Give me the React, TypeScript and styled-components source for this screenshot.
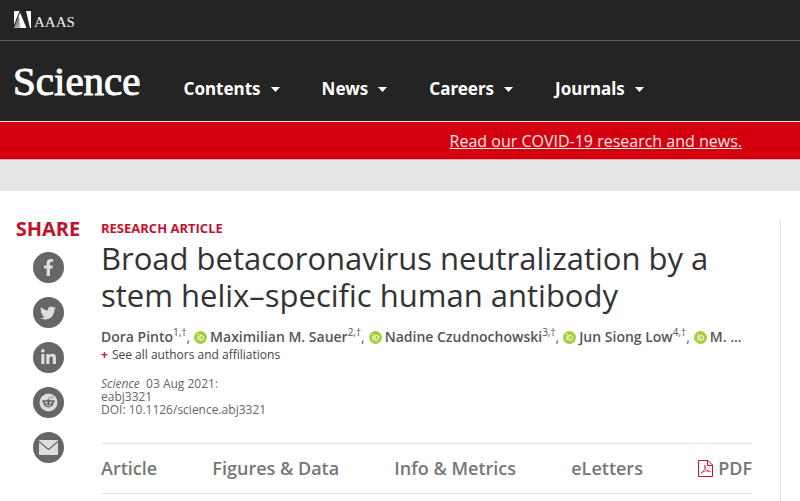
import React from "react";
import styled, { createGlobalStyle } from "styled-components";
import { FaFacebookF, FaTwitter, FaLinkedinIn } from "react-icons/fa";

const Global = createGlobalStyle`
  *, *::before, *::after { box-sizing: border-box; }
  body {
    margin: 0;
    background: #fff;
    color: #333;
    font-family: "Open Sans", "Noto Sans", sans-serif;
  }
  h1, p, ul { margin: 0; padding: 0; }
  ul { list-style: none; }
  a { color: inherit; text-decoration: none; }
`;

const Page = styled.div`
  min-height: 100vh;
  display: flex;
  flex-direction: column;
`;

const TopBar = styled.div`
  display: flex;
  align-items: center;
  height: 41px;
  padding: 0 14px 2px;
  background: #242424;
  border-bottom: 1px solid #5c5c5c;
`;

const AaasLink = styled.a`
  display: flex;
  align-items: flex-end;
  gap: 3px;
  color: #f2f2f2;
  font: 15px/12px "Liberation Serif", serif;
`;

const Masthead = styled.header`
  display: flex;
  align-items: center;
  gap: 43px;
  height: 80px;
  padding: 0 13px;
  background: #242424;
`;

const ScienceLink = styled.a`
  color: #fff;
  font: 41px/48px "Liberation Serif", serif;
  -webkit-text-stroke: 1px #fff;
`;

const Nav = styled.nav`
  display: flex;
  gap: 42px;
  padding-top: 16px;
`;

const NavButton = styled.button`
  display: flex;
  align-items: center;
  gap: 10px;
  padding: 0;
  border: 0;
  background: none;
  color: #fff;
  font: 700 17px/24px "Noto Sans", sans-serif;
`;

const Banner = styled.div`
  display: flex;
  justify-content: flex-end;
  padding: 7px 58px 6px;
  background: #d5000f;
  border-top: 1px solid #f3dcdd;
  border-bottom: 1px solid #e9a9ae;
  color: #fbeaea;
  font-size: 16px;
  line-height: 24px;
  a { text-decoration: underline; }
`;

const AdStrip = styled.div`
  height: 31px;
  background: #e5e4e7;
`;

const Content = styled.main`
  flex: 1;
  display: flex;
  margin: 29px 19px 0 15px;
  border-right: 1px solid #e2e2e6;
`;

const Share = styled.aside`
  flex: none;
  width: 66px;
  margin-right: 20px;
  display: flex;
  flex-direction: column;
  align-items: center;
`;

const ShareTitle = styled.p`
  color: #c3102c;
  font-size: 20px;
  font-weight: 700;
  line-height: 18px;
`;

const ShareList = styled.ul`
  display: flex;
  flex-direction: column;
  gap: 14px;
  margin-top: 14px;
`;

const ShareButton = styled.button`
  display: flex;
  align-items: center;
  justify-content: center;
  width: 31px;
  height: 31px;
  padding: 0;
  border: 0;
  border-radius: 50%;
  background: #666;
  color: #dedede;
`;

const Article = styled.article`
  flex: 1;
  min-width: 0;
  padding-right: 28px;
`;

const Kicker = styled.p`
  color: #c3102c;
  font-size: 13px;
  font-weight: 700;
  line-height: 16px;
`;

const Title = styled.h1`
  margin-top: 4px;
  color: #333;
  font-size: 31px;
  font-weight: 400;
  line-height: 37px;
`;

const Authors = styled.ul`
  display: flex;
  gap: 4px;
  margin-top: 14px;
  color: #555;
  font-size: 14px;
  line-height: 18px;
  white-space: nowrap;
`;

const AuthorItem = styled.li`
  display: flex;
  align-items: center;
  gap: 3px;
  b { font-weight: 600; }
  sup { font-size: 10px; line-height: 1px; }
`;

const SeeAll = styled.button`
  display: block;
  padding: 0;
  border: 0;
  background: none;
  color: #444;
  font: 12px/18px "Open Sans", "Noto Sans", sans-serif;
  b { color: #c3102c; margin-right: 4px; }
`;

const Citation = styled.p`
  margin-top: 13px;
  color: #666;
  font-size: 12px;
  line-height: 13px;
`;

const Tabs = styled.nav`
  display: flex;
  justify-content: space-between;
  margin-top: 27px;
  padding: 12px 0;
  border-top: 1px solid #e2e0e4;
  border-bottom: 1px solid #e2e0e4;
  color: #767676;
  font-size: 18px;
  font-weight: 600;
  line-height: 25px;
  a { display: flex; align-items: center; gap: 5px; }
`;

const AaasMark = () => (
  <svg width="17" height="17" viewBox="0 0 17 17" aria-hidden="true">
    <path d="M0 0H5.500L0 14Z" fill="#fff" />
    <path d="M5.500 3L7 17H0Z" fill="#b4b4b4" />
    <path d="M6 1.500L12.500 17H6.500L4.800 5Z" fill="#fff" />
    <path d="M12 0H17V17H16Z" fill="#fff" />
    <path d="M1 16L4 8M3 16L5 7" stroke="#666" strokeWidth=".7" />
  </svg>
);

const Caret = () => (
  <svg width="9" height="5" viewBox="0 0 9 5" aria-hidden="true">
    <path d="M0 0H9L4.500 5Z" fill="currentColor" />
  </svg>
);

const RedditIcon = () => (
  <svg width="19" height="19" viewBox="0 0 19 19" aria-hidden="true">
    <circle cx="9.500" cy="9.500" r="9" fill="#dedede" />
    <path d="M9.300 7L10.200 3.800L13 4.400" fill="none" stroke="#999" strokeWidth=".8" />
    <circle cx="13.400" cy="4.600" r="1" fill="#999" />
    <circle cx="4.600" cy="8.300" r="1.300" fill="#666" />
    <circle cx="14.400" cy="8.300" r="1.300" fill="#666" />
    <ellipse cx="9.500" cy="10.500" rx="5" ry="3.900" fill="#666" />
    <circle cx="7.400" cy="9.700" r="1.150" fill="#dedede" />
    <circle cx="11.600" cy="9.700" r="1.150" fill="#dedede" />
    <path d="M7 12Q9.500 13.500 12 12" fill="none" stroke="#dedede" strokeWidth=".9" />
  </svg>
);

const MailIcon = () => (
  <svg width="19" height="15" viewBox="0 0 19 15" aria-hidden="true">
    <rect width="19" height="15" rx="1" fill="#dedede" />
    <path d="M0 1.500L9.500 9.500L19 1.500" fill="none" stroke="#666" strokeWidth="1.300" />
  </svg>
);

const OrcidIcon = () => (
  <svg width="13" height="13" viewBox="0 0 13 13" aria-hidden="true">
    <circle cx="6.500" cy="6.500" r="6.500" fill="#a6ce39" />
    <path d="M4 4.700V9.500M6 4.400H7.200A2.400 2.400 0 0 1 7.200 9.200H6Z" fill="none" stroke="#fff" />
    <circle cx="4" cy="3.200" r=".7" fill="#fff" />
  </svg>
);

const PdfIcon = () => (
  <svg width="15" height="17" viewBox="0 0 15 17" fill="none" stroke="#c3102c" aria-hidden="true">
    <path d="M.5.5H10L14.500 5V16.500H.5Z" />
    <path d="M9.500.5V5.500H14.500" />
    <path
      d="M6.800 5.500C8.500 5.500 7 9.500 3.700 13.300C2.300 14 3 12 6.500 11.200C9.500 10.500 13 10.900 12.300 11.800C11.200 12.700 7.200 9.800 6.500 6.200C6.500 5.700 6.600 5.500 6.800 5.500Z"
      strokeWidth=".7"
    />
  </svg>
);

const sections = ["Contents", "News", "Careers", "Journals"];

const shareTargets = [
  { label: "Facebook", icon: <FaFacebookF size={17} /> },
  { label: "Twitter", icon: <FaTwitter size={16} /> },
  { label: "LinkedIn", icon: <FaLinkedinIn size={17} /> },
  { label: "Reddit", icon: <RedditIcon /> },
  { label: "Email", icon: <MailIcon /> },
];

const authors = [
  { name: "Dora Pinto", note: "1,†", orcid: false },
  { name: "Maximilian M. Sauer", note: "2,†", orcid: true },
  { name: "Nadine Czudnochowski", note: "3,†", orcid: true },
  { name: "Jun Siong Low", note: "4,†", orcid: true },
];

export default function App() {
  return (
    <Page>
      <Global />
      <TopBar>
        <AaasLink href="#aaas">
          <AaasMark />
          AAAS
        </AaasLink>
      </TopBar>
      <Masthead>
        <ScienceLink href="#home">Science</ScienceLink>
        <Nav>
          {sections.map((name) => (
            <NavButton key={name} type="button">
              {name}
              <Caret />
            </NavButton>
          ))}
        </Nav>
      </Masthead>
      <Banner>
        <a href="#covid">Read our COVID-19 research and news.</a>
      </Banner>
      <AdStrip />
      <Content>
        <Share>
          <ShareTitle>SHARE</ShareTitle>
          <ShareList>
            {shareTargets.map(({ label, icon }) => (
              <li key={label}>
                <ShareButton type="button" aria-label={label}>
                  {icon}
                </ShareButton>
              </li>
            ))}
          </ShareList>
        </Share>
        <Article>
          <Kicker>RESEARCH ARTICLE</Kicker>
          <Title>Broad betacoronavirus neutralization by a stem helix–specific human antibody</Title>
          <Authors>
            {authors.map(({ name, note, orcid }) => (
              <AuthorItem key={name}>
                {orcid && <OrcidIcon />}
                <span>
                  <b>{name}</b>
                  <sup>{note}</sup>,
                </span>
              </AuthorItem>
            ))}
            <AuthorItem>
              <OrcidIcon />
              <b>M. ...</b>
            </AuthorItem>
          </Authors>
          <SeeAll type="button">
            <b>+</b>See all authors and affiliations
          </SeeAll>
          <Citation>
            <i>Science</i>&nbsp; 03 Aug 2021:
            <br />
            eabj3321
            <br />
            DOI: 10.1126/science.abj3321
          </Citation>
          <Tabs>
            <a href="#article">Article</a>
            <a href="#figures">Figures &amp; Data</a>
            <a href="#info">Info &amp; Metrics</a>
            <a href="#eletters">eLetters</a>
            <a href="#pdf">
              <PdfIcon />
              PDF
            </a>
          </Tabs>
        </Article>
      </Content>
    </Page>
  );
}
